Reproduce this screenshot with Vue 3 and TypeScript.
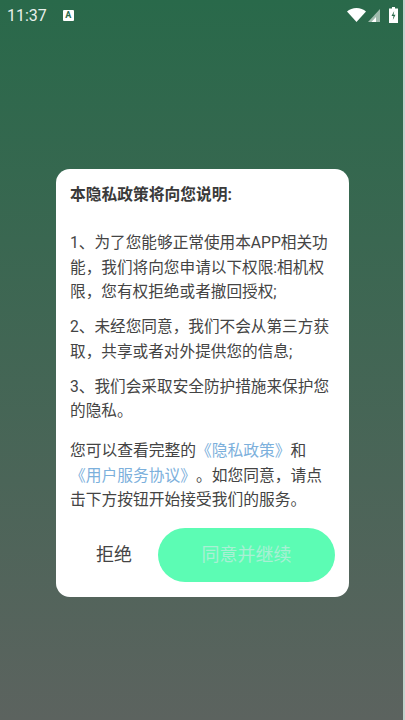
<script setup lang="ts">
const paragraphs: string[] = [
  '1、为了您能够正常使用本APP相关功能，我们将向您申请以下权限:相机权限，您有权拒绝或者撤回授权;',
  '2、未经您同意，我们不会从第三方获取，共享或者对外提供您的信息;',
  '3、我们会采取安全防护措施来保护您的隐私。',
]
</script>

<template>
  <div class="screen">
    <div class="status">
      <span class="time">11:37</span>
      <span class="badge">A</span>
      <span class="spacer"></span>
      <svg class="wifi" width="19" height="14" viewBox="0 0 19 14"><path d="M0 3.600C2.500 1.400 5.800 0 9.500 0s7 1.400 9.500 3.600L9.500 14z" fill="#fff"/></svg>
      <svg class="cell" width="12" height="13" viewBox="0 0 12 13"><path d="M0 13L12 0v13z" fill="#fff" opacity=".55"/><path d="M3.500 13L8 8v5z" fill="#fff"/></svg>
      <svg class="batt" width="9" height="16" viewBox="0 0 9 16"><path d="M3 0h3v1.500h3V16H0V1.500h3z" fill="#fff"/><path d="M5.200 4L2.500 9h2L3.800 13l2.700-5.200h-2z" fill="#2a6a4b"/></svg>
    </div>
    <div class="center">
      <div class="card">
        <p class="title">本隐私政策将向您说明:</p>
        <div class="body">
          <p v-for="p in paragraphs" :key="p" class="para">{{ p }}</p>
        </div>
        <p class="notice">您可以查看完整的<a class="link">《隐私政策》</a>和<a class="link">《用户服务协议》</a>。如您同意，请点击下方按钮开始接受我们的服务。</p>
        <div class="actions">
          <button class="reject">拒绝</button>
          <button class="accept">同意并继续</button>
        </div>
      </div>
    </div>
  </div>
</template>

<style>
html, body { margin: 0; padding: 0; }
</style>

<style scoped>
.screen {
  width: 405px;
  height: 720px;
  box-sizing: border-box;
  display: flex;
  flex-direction: column;
  overflow: hidden;
  border-right: 2px solid #c3d3cd;
  background: linear-gradient(180deg, #29694a 0%, #5c635f 100%);
  font-family: "Roboto", "Noto Sans CJK SC", sans-serif;
}
.status {
  height: 30px;
  display: flex;
  align-items: center;
  padding: 0 5px 0 7px;
  color: #e8f0ec;
  flex: none;
}
.time { font-size: 16px; }
.badge {
  margin-left: 16px;
  width: 11px;
  height: 11px;
  background: #fff;
  color: #29694a;
  font-size: 9px;
  font-weight: 700;
  line-height: 11px;
  text-align: center;
  border-radius: 1px;
}
.spacer { flex: 1; }
.cell { margin-left: 2px; margin-top: 1px; }
.batt { margin-left: 9px; }
.center {
  flex: 1;
  display: flex;
  justify-content: center;
  align-items: flex-start;
  padding: 139px 0 0 2px;
}
.card {
  width: 293px;
  height: 428px;
  box-sizing: border-box;
  background: #fff;
  border-radius: 14px;
  padding: 14px 14px 0;
  color: #444;
  font-size: 15.75px;
  line-height: 24.5px;
  display: flex;
  flex-direction: column;
  text-spacing-trim: space-all;
}
.card p { margin: 0; }
.title { font-weight: 700; color: #3a3a3a; }
.body {
  display: flex;
  flex-direction: column;
  gap: 10.5px;
  margin-top: 23.5px;
  font-size: 15.65px;
}
.card .notice { margin-top: 15.5px; }
.link { color: #7cb0dc; }
.actions {
  display: flex;
  align-items: center;
  margin-top: 15.5px;
}
.reject {
  width: 88px;
  height: 54px;
  border: 0;
  background: transparent;
  color: #444;
  font: inherit;
  font-size: 18px;
  padding: 0;
}
.accept {
  width: 177px;
  height: 54px;
  border: 0;
  border-radius: 27px;
  background: #5cfcb4;
  color: #a9f0d4;
  font: inherit;
  font-size: 18px;
  padding: 0;
}
</style>
